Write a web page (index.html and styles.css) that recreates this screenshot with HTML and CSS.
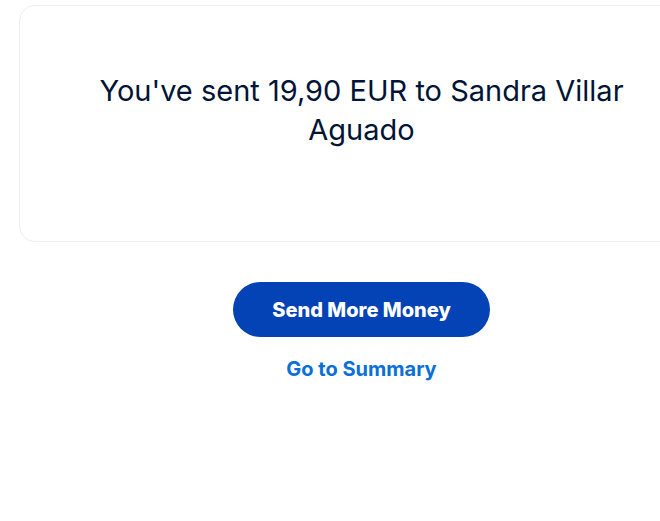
FILE: index.html
```html
<!DOCTYPE html>
<html>
<head>
<meta charset="utf-8">
<link rel="stylesheet" href="styles.css">
</head>
<body>
<main class="page">
  <section class="card">
    <h1 class="message">You've sent 19,90 EUR to Sandra Villar Aguado</h1>
  </section>
  <div class="actions">
    <button class="primary">Send More Money</button>
    <a class="link" href="#">Go to Summary</a>
  </div>
</main>
</body>
</html>
```

FILE: styles.css
```css
html, body {
  margin: 0;
  padding: 0;
  background: #ffffff;
  overflow: hidden;
}
body {
  font-family: Inter, "Liberation Sans", sans-serif;
}
.page {
  width: 685px;
  margin-left: 19px;
  padding-top: 5px;
  display: flex;
  flex-direction: column;
  align-items: center;
}
.card {
  box-sizing: border-box;
  width: 100%;
  height: 237px;
  border: 1px solid #eeeeee;
  border-radius: 16px;
  display: flex;
  justify-content: center;
  padding-top: 65px;
}
.message {
  margin: 0;
  width: 560px;
  text-align: center;
  font-size: 29px;
  font-weight: 400;
  line-height: 39px;
  color: #001435;
}
.actions {
  margin-top: 40px;
  display: flex;
  flex-direction: column;
  align-items: center;
  gap: 20px;
}
.primary {
  width: 257px;
  height: 55px;
  border: none;
  border-radius: 28px;
  background: #0343b6;
  color: #ffffff;
  font-family: Inter, "Liberation Sans", sans-serif;
  font-size: 20px;
  font-weight: 800;
}
.link {
  color: #0a6fd6;
  text-decoration: none;
  font-size: 20px;
  font-weight: 700;
}
```
